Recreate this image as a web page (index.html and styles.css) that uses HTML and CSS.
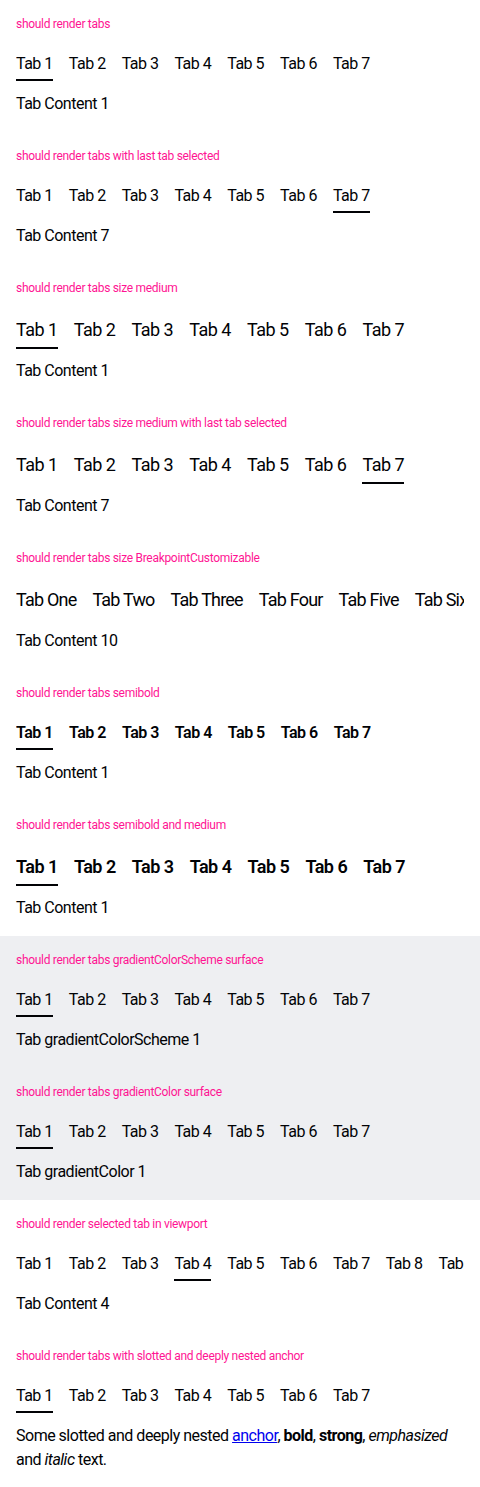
FILE: index.html
```html
<!DOCTYPE html>
<html lang="en">
<head>
<meta charset="utf-8">
<title>Tabs</title>
<link rel="stylesheet" href="styles.css">
</head>
<body>
<div class="playground">
  <p class="title">should render tabs</p>
  <div class="bar">
    <span class="tab active">Tab 1</span><span class="tab">Tab 2</span><span class="tab">Tab 3</span><span class="tab">Tab 4</span><span class="tab">Tab 5</span><span class="tab">Tab 6</span><span class="tab">Tab 7</span>
  </div>
  <p class="content">Tab Content 1</p>
</div>

<div class="playground">
  <p class="title">should render tabs with last tab selected</p>
  <div class="bar">
    <span class="tab">Tab 1</span><span class="tab">Tab 2</span><span class="tab">Tab 3</span><span class="tab">Tab 4</span><span class="tab">Tab 5</span><span class="tab">Tab 6</span><span class="tab active">Tab 7</span>
  </div>
  <p class="content">Tab Content 7</p>
</div>

<div class="playground">
  <p class="title">should render tabs size medium</p>
  <div class="bar medium">
    <span class="tab active">Tab 1</span><span class="tab">Tab 2</span><span class="tab">Tab 3</span><span class="tab">Tab 4</span><span class="tab">Tab 5</span><span class="tab">Tab 6</span><span class="tab">Tab 7</span>
  </div>
  <p class="content">Tab Content 1</p>
</div>

<div class="playground">
  <p class="title">should render tabs size medium with last tab selected</p>
  <div class="bar medium">
    <span class="tab">Tab 1</span><span class="tab">Tab 2</span><span class="tab">Tab 3</span><span class="tab">Tab 4</span><span class="tab">Tab 5</span><span class="tab">Tab 6</span><span class="tab active">Tab 7</span>
  </div>
  <p class="content">Tab Content 7</p>
</div>

<div class="playground">
  <p class="title">should render tabs size BreakpointCustomizable</p>
  <div class="bar medium wide">
    <span class="tab">Tab One</span><span class="tab">Tab Two</span><span class="tab">Tab Three</span><span class="tab">Tab Four</span><span class="tab">Tab Five</span><span class="tab">Tab Six</span><span class="tab">Tab Seven</span>
  </div>
  <p class="content">Tab Content 10</p>
</div>

<div class="playground">
  <p class="title">should render tabs semibold</p>
  <div class="bar semibold">
    <span class="tab active">Tab 1</span><span class="tab">Tab 2</span><span class="tab">Tab 3</span><span class="tab">Tab 4</span><span class="tab">Tab 5</span><span class="tab">Tab 6</span><span class="tab">Tab 7</span>
  </div>
  <p class="content">Tab Content 1</p>
</div>

<div class="playground">
  <p class="title">should render tabs semibold and medium</p>
  <div class="bar medium semibold">
    <span class="tab active">Tab 1</span><span class="tab">Tab 2</span><span class="tab">Tab 3</span><span class="tab">Tab 4</span><span class="tab">Tab 5</span><span class="tab">Tab 6</span><span class="tab">Tab 7</span>
  </div>
  <p class="content">Tab Content 1</p>
</div>

<div class="playground surface">
  <p class="title">should render tabs gradientColorScheme surface</p>
  <div class="bar">
    <span class="tab active">Tab 1</span><span class="tab">Tab 2</span><span class="tab">Tab 3</span><span class="tab">Tab 4</span><span class="tab">Tab 5</span><span class="tab">Tab 6</span><span class="tab">Tab 7</span>
  </div>
  <p class="content">Tab gradientColorScheme 1</p>
</div>

<div class="playground surface">
  <p class="title">should render tabs gradientColor surface</p>
  <div class="bar">
    <span class="tab active">Tab 1</span><span class="tab">Tab 2</span><span class="tab">Tab 3</span><span class="tab">Tab 4</span><span class="tab">Tab 5</span><span class="tab">Tab 6</span><span class="tab">Tab 7</span>
  </div>
  <p class="content">Tab gradientColor 1</p>
</div>

<div class="playground">
  <p class="title">should render selected tab in viewport</p>
  <div class="bar">
    <span class="tab">Tab 1</span><span class="tab">Tab 2</span><span class="tab">Tab 3</span><span class="tab active">Tab 4</span><span class="tab">Tab 5</span><span class="tab">Tab 6</span><span class="tab">Tab 7</span><span class="tab">Tab 8</span><span class="tab">Tab 9</span><span class="tab">Tab 10</span>
  </div>
  <p class="content">Tab Content 4</p>
</div>

<div class="playground">
  <p class="title">should render tabs with slotted and deeply nested anchor</p>
  <div class="bar">
    <span class="tab active">Tab 1</span><span class="tab">Tab 2</span><span class="tab">Tab 3</span><span class="tab">Tab 4</span><span class="tab">Tab 5</span><span class="tab">Tab 6</span><span class="tab">Tab 7</span>
  </div>
  <p class="content">Some slotted and deeply nested <a href="#">anchor</a>, <b>bold</b>, <strong>strong</strong>, <em>emphasized</em> and <i>italic</i> text.</p>
</div>
</body>
</html>
```

FILE: styles.css
```css
html, body {
  margin: 0;
  padding: 0;
  background: #fff;
}

body {
  font-family: Roboto, "Liberation Sans", sans-serif;
  color: #010205;
}

.playground {
  padding: 17px 16px 16px;
}

.surface {
  background: #eeeff2;
}

.title {
  margin: 0 0 15px;
  font-size: 12px;
  line-height: 14px;
  letter-spacing: -0.3px;
  color: #ff1493;
}

.bar {
  display: flex;
  gap: 16px;
  overflow: hidden;
  white-space: nowrap;
  font-size: 16px;
  line-height: 24px;
  letter-spacing: -0.5px;
}

.tab {
  flex: none;
  padding: 6px 0 3px;
  border-bottom: 2px solid transparent;
}

.tab.active {
  border-bottom-color: #010205;
}

.bar.medium {
  font-size: 18px;
  line-height: 28px;
}

.bar.medium .tab {
  padding: 6px 0 3px;
}

.bar.wide {
  letter-spacing: -0.8px;
}

.bar.semibold {
  font-weight: 600;
}

.content {
  margin: 11px 0 0;
  font-size: 16px;
  line-height: 24px;
  letter-spacing: -0.5px;
}

.bar.medium + .content {
  margin-top: 10px;
}

.content a {
  color: #0000ee;
}
```
